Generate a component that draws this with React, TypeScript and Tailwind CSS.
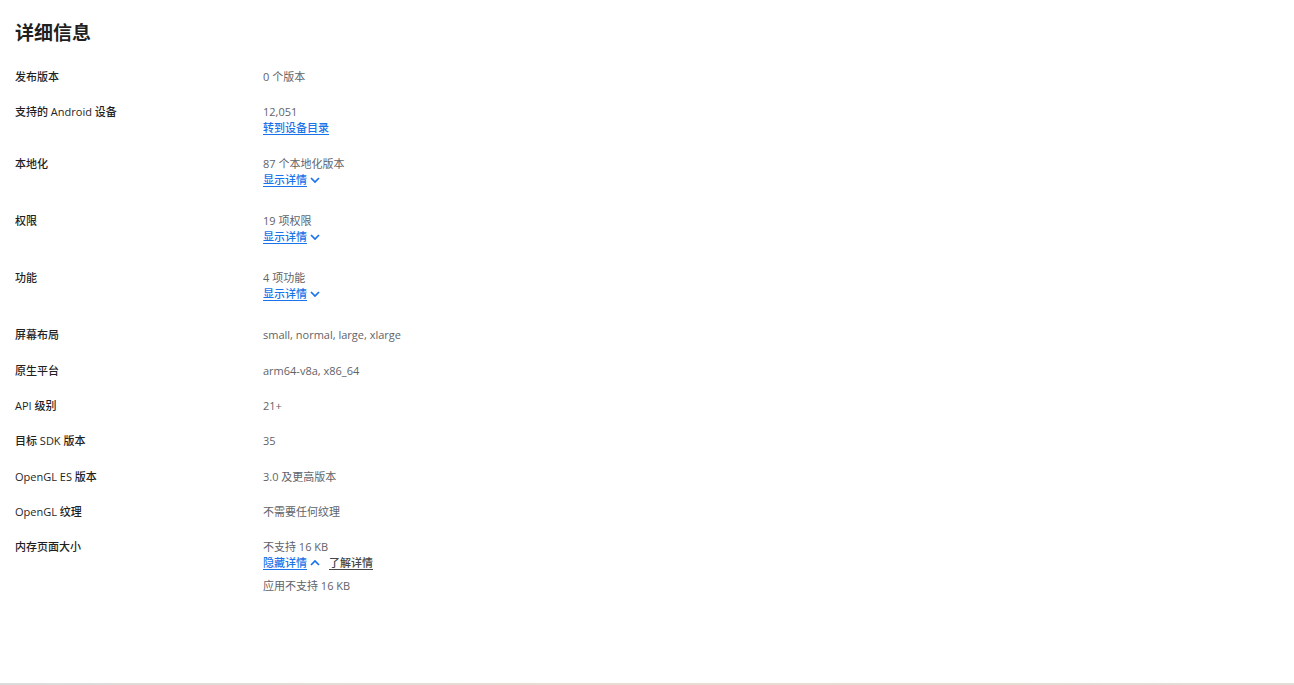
import { ReactNode } from "react";

interface Row {
  label: string;
  value: string;
  extra?: ReactNode;
}

function Chevron({ up }: { up?: boolean }) {
  return (
    <svg width="12" height="12" viewBox="0 0 24 24" className="ml-[2px]">
      <path
        d={up ? "M4 16l8-8 8 8" : "M4 8l8 8 8-8"}
        fill="none"
        stroke="#1a73e8"
        strokeWidth="3.5"
      />
    </svg>
  );
}

function ShowMore() {
  return (
    <button className="flex items-center h-4 mb-[6px] text-[#1a73e8] font-medium">
      <span className="underline underline-offset-2">显示详情</span>
      <Chevron />
    </button>
  );
}

const rows: Row[] = [
  { label: "发布版本", value: "0 个版本" },
  {
    label: "支持的 Android 设备",
    value: "12,051",
    extra: (
      <a className="block text-[#1a73e8] font-medium underline underline-offset-2">转到设备目录</a>
    ),
  },
  { label: "本地化", value: "87 个本地化版本", extra: <ShowMore /> },
  { label: "权限", value: "19 项权限", extra: <ShowMore /> },
  { label: "功能", value: "4 项功能", extra: <ShowMore /> },
  { label: "屏幕布局", value: "small, normal, large, xlarge" },
  { label: "原生平台", value: "arm64-v8a, x86_64" },
  { label: "API 级别", value: "21+" },
  { label: "目标 SDK 版本", value: "35" },
  { label: "OpenGL ES 版本", value: "3.0 及更高版本" },
  { label: "OpenGL 纹理", value: "不需要任何纹理" },
  {
    label: "内存页面大小",
    value: "不支持 16 KB",
    extra: (
      <>
        <div className="flex items-center h-4 mb-[7px] gap-2 font-medium">
          <button className="flex items-center text-[#1a73e8]">
            <span className="underline underline-offset-2">隐藏详情</span>
            <Chevron up />
          </button>
          <a className="text-[#444746] underline underline-offset-2">了解详情</a>
        </div>
        <div>应用不支持 16 KB</div>
      </>
    ),
  },
];

export default function App() {
  return (
    <div
      className="w-[1294px] h-[685px] bg-white flex flex-col text-[11px] leading-4"
      style={{ fontFamily: '"Open Sans", "Noto Sans CJK SC", sans-serif' }}
    >
      <div className="flex-1 px-[15px] pt-[19px]">
        <h2 className="text-[19px] leading-7 font-bold text-[#1f1f1f] mb-[22px]">详细信息</h2>
        <div className="flex flex-col">
          {rows.map((r) => (
            <div key={r.label} className="flex pb-[19.3px]">
              <div className="w-[248px] shrink-0 font-medium text-[#1f1f1f]">{r.label}</div>
              <div className="text-[#5f6368]">
                <div>{r.value}</div>
                {r.extra}
              </div>
            </div>
          ))}
        </div>
      </div>
      <div className="h-[2px] bg-gradient-to-r from-[#dcdcdc] via-[#eadcd2] to-[#e2ddd6]" />
    </div>
  );
}
